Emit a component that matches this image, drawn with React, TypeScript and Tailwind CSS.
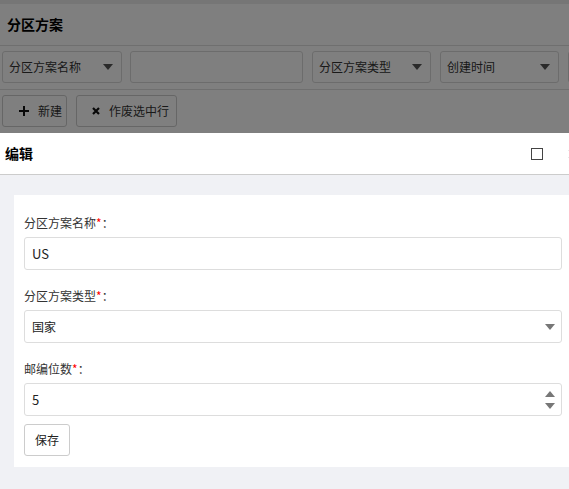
import React from "react";

const font = { fontFamily: '"Noto Sans CJK SC", "Noto Sans", sans-serif' };

function Caret({ className = "" }: { className?: string }) {
  return (
    <svg width="10" height="6" viewBox="0 0 10 6" className={className}>
      <path d="M0 0 L10 0 L5 6 Z" fill="currentColor" />
    </svg>
  );
}

function FakeSelect({ w, label }: { w: string; label: string }) {
  return (
    <div className={`${w} h-[32px] shrink-0 flex items-center justify-between border border-[#d8d8d8] rounded-[3px] pl-[6px] pr-[8px] text-[12px] text-[#333] bg-white`}>
      <span>{label}</span>
      <Caret className="text-[#555]" />
    </div>
  );
}

export default function App() {
  return (
    <div className="relative h-[489px] w-[569px] overflow-hidden bg-white" style={font}>
      {/* background page */}
      <div className="h-[4px] bg-[#ececec]" />
      <div className="h-[42px] flex items-center px-[7px] border-b border-[#dedede] text-[14px] font-bold text-black">
        分区方案
      </div>
      <div className="h-[44px] flex items-start pt-[5px] pl-[2px] border-b border-[#dedede]">
        <FakeSelect w="w-[120px]" label="分区方案名称" />
        <div className="ml-[8px] w-[173px] h-[32px] shrink-0 border border-[#d8d8d8] rounded-[3px] bg-white" />
        <div className="ml-[9px]">
          <FakeSelect w="w-[119px]" label="分区方案类型" />
        </div>
        <div className="ml-[9px]">
          <FakeSelect w="w-[119px]" label="创建时间" />
        </div>
        <div className="ml-[9px]">
          <FakeSelect w="w-[119px]" label="" />
        </div>
      </div>
      <div className="flex items-start pt-[5px] pl-[2px] gap-[9px]">
        <div className="h-[32px] w-[65px] flex items-center pl-[16px] gap-[9px] border border-[#cccccc] rounded-[3px] text-[12px] text-[#333] bg-white">
          <svg width="10" height="10" viewBox="0 0 10 10">
            <path d="M4 0h2v4h4v2H6v4H4V6H0V4h4z" fill="#111" />
          </svg>
          <span>新建</span>
        </div>
        <div className="h-[32px] w-[101px] flex items-center pl-[15px] gap-[9px] border border-[#cccccc] rounded-[3px] text-[12px] text-[#333] bg-white">
          <svg width="8" height="8" viewBox="0 0 8 8">
            <path d="M1 1L7 7M7 1L1 7" stroke="#111" strokeWidth="2.2" />
          </svg>
          <span>作废选中行</span>
        </div>
      </div>

      {/* overlay */}
      <div className="absolute inset-0 bg-black/50" />

      {/* modal */}
      <div className="absolute left-0 top-[133px] w-[590px] h-[356px] bg-[#f0f1f5] flex flex-col">
        <div className="h-[42px] shrink-0 bg-white border-b border-[#cccccc] flex items-center pl-[5px]">
          <span className="text-[14px] font-bold text-black">编辑</span>
          <div className="ml-auto flex items-center">
            <div className="w-[12px] h-[12px] border-[1.5px] border-[#444] mr-[25px]" />
            <svg width="10" height="10" viewBox="0 0 10 10" className="mr-[12px]">
              <path d="M1 1L9 9M9 1L1 9" stroke="#999" strokeWidth="1.4" />
            </svg>
          </div>
        </div>
        <div className="pt-[20px] pl-[14px]">
          <div className="w-[558px] bg-white px-[10px] pt-[18px] pb-[11px] text-[12px] text-[#333]">
            <div className="leading-[20px]">
              分区方案名称<span className="text-[#ff0000]">*</span>：
            </div>
            <div className="mt-[4px] h-[33px] border border-[#dddddd] rounded-[3px] flex items-center px-[7px] text-[13px] text-[#222]">
              US
            </div>
            <div className="mt-[16px] leading-[20px]">
              分区方案类型<span className="text-[#ff0000]">*</span>：
            </div>
            <div className="mt-[4px] h-[33px] border border-[#dddddd] rounded-[3px] flex items-center justify-between pl-[7px] pr-[6px] text-[12px] text-[#222]">
              <span>国家</span>
              <Caret className="text-[#777]" />
            </div>
            <div className="mt-[16px] leading-[20px]">
              邮编位数<span className="text-[#ff0000]">*</span>：
            </div>
            <div className="mt-[4px] h-[33px] border border-[#dddddd] rounded-[3px] flex items-center justify-between pl-[7px] pr-[6px] text-[13px] text-[#222]">
              <span>5</span>
              <div className="flex flex-col gap-[6px] text-[#777]">
                <Caret className="rotate-180" />
                <Caret />
              </div>
            </div>
            <div className="mt-[8px] h-[32px] w-[46px] border border-[#cccccc] rounded-[3px] flex items-center justify-center text-[12px] text-[#222]">
              保存
            </div>
          </div>
        </div>
      </div>
    </div>
  );
}
